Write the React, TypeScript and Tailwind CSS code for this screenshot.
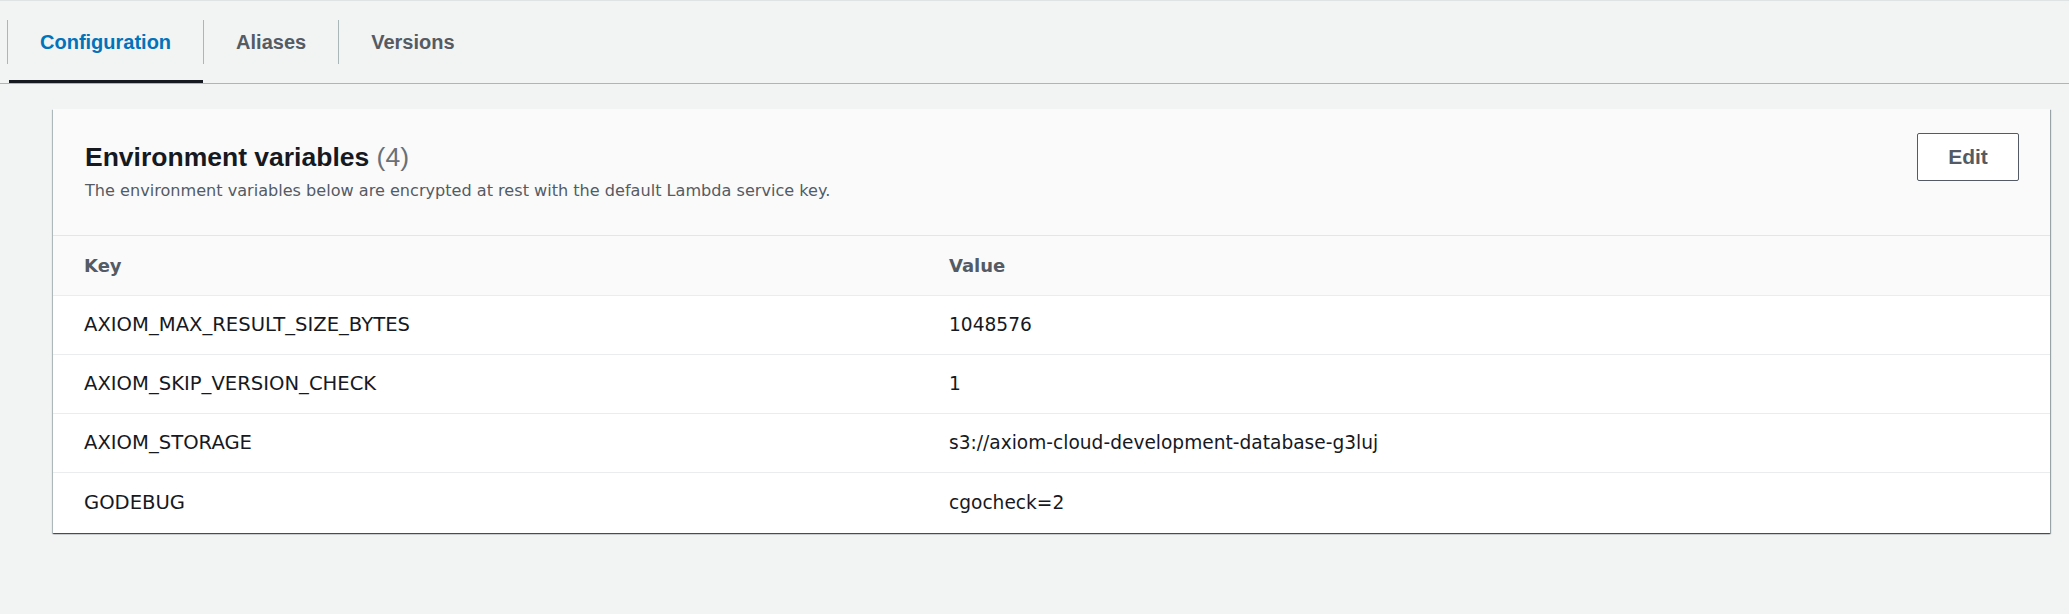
import React from 'react'

const rows = [
  { key: 'AXIOM_MAX_RESULT_SIZE_BYTES', value: '1048576' },
  { key: 'AXIOM_SKIP_VERSION_CHECK', value: '1' },
  { key: 'AXIOM_STORAGE', value: 's3://axiom-cloud-development-database-g3luj' },
  { key: 'GODEBUG', value: 'cgocheck=2' },
]

const tabs = ['Configuration', 'Aliases', 'Versions']

const App = () => {
  return (
    <main className="h-[614px] w-full bg-[#f2f3f3] font-['Liberation_Sans',sans-serif] text-[#16191f] overflow-hidden">
      {/* tabs */}
      <nav className="flex h-[84px] border-t border-b border-t-[#dfe3e3] border-b-[#aab7b8] pl-[7px]">
        {tabs.map((t, i) => (
          <div key={t} className="flex items-center h-full">
            <span className="w-px h-[44px] bg-[#aab7b8]" />
            <div className="relative h-full flex items-center px-8">
              <span className={i === 0 ? 'text-[20px] font-bold text-[#0073bb]' : 'text-[20px] font-bold text-[#545b64]'}>
                {t}
              </span>
              {i === 0 && <span className="absolute left-[1px] right-0 bottom-0 h-[3px] bg-[#16191f]" />}
            </div>
          </div>
        ))}
      </nav>

      {/* card */}
      <section className="ml-[53px] mr-[19px] mt-[25px] bg-white shadow-[0_1px_1px_0_rgba(0,28,36,0.55),1px_1px_1px_0_rgba(0,28,36,0.3),-1px_1px_1px_0_rgba(0,28,36,0.2)]">
        <div className="flex justify-between items-start bg-[#fafafa] pl-8 pr-[31px] pt-6 h-[127px] border-b border-[#e3e6e6]">
          <div className="mt-[7px]">
            <h2 className="text-[26.5px] leading-[34px] font-bold">
              Environment variables <span className="font-normal text-[#687078]">(4)</span>
            </h2>
            <p className="mt-[6px] font-['DejaVu_Sans',sans-serif] text-[16.1px] leading-[22px] text-[#545b64]">
              The environment variables below are encrypted at rest with the default Lambda service key.
            </p>
          </div>
          <button className="w-[102px] h-[48px] border-[1.5px] border-[#545b64] rounded-[2px] bg-white text-[21px] font-bold text-[#545b64]">
            Edit
          </button>
        </div>

        <div className="grid grid-cols-[896px_1fr] h-[60px] items-center bg-[#fafafa] border-b border-[#eaeded] font-['DejaVu_Sans',sans-serif] text-[18px] font-bold text-[#545b64]">
          <div className="pl-[31px]">Key</div>
          <div>Value</div>
        </div>
        {rows.map((r, i) => (
          <div
            key={r.key}
            className={
              i < rows.length - 1
                ? "grid grid-cols-[896px_1fr] h-[59px] items-center border-b border-[#eaeded] font-['DejaVu_Sans',sans-serif] text-[18.6px]"
                : "grid grid-cols-[896px_1fr] h-[60px] items-center font-['DejaVu_Sans',sans-serif] text-[18.6px]"
            }
          >
            <div className="pl-[31px] text-[19.6px]">{r.key}</div>
            <div>{r.value}</div>
          </div>
        ))}
      </section>
    </main>
  )
}

export default App
